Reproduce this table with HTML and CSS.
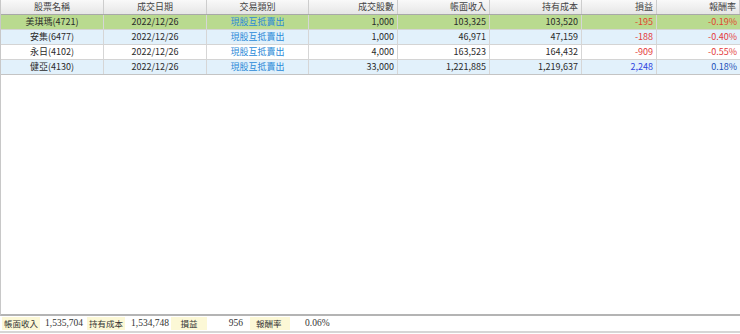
FILE: index.html
```html
<!DOCTYPE html>
<html lang="zh-Hant">
<head>
<meta charset="utf-8">
<link rel="stylesheet" href="styles.css">
</head>
<body>
<div class="app">
  <div class="grid">
    <div class="row head">
      <div class="c c1">股票名稱</div>
      <div class="c c2">成交日期</div>
      <div class="c c3">交易類別</div>
      <div class="c c4 r">成交股數</div>
      <div class="c c5 r">帳面收入</div>
      <div class="c c6 r">持有成本</div>
      <div class="c c7 r">損益</div>
      <div class="c c8 r">報酬率</div>
    </div>
    <div class="row sel">
      <div class="c c1">美琪瑪(4721)</div>
      <div class="c c2">2022/12/26</div>
      <div class="c c3 link">現股互抵賣出</div>
      <div class="c c4 r">1,000</div>
      <div class="c c5 r">103,325</div>
      <div class="c c6 r">103,520</div>
      <div class="c c7 r neg">-195</div>
      <div class="c c8 r neg">-0.19%</div>
    </div>
    <div class="row alt">
      <div class="c c1">安集(6477)</div>
      <div class="c c2">2022/12/26</div>
      <div class="c c3 link">現股互抵賣出</div>
      <div class="c c4 r">1,000</div>
      <div class="c c5 r">46,971</div>
      <div class="c c6 r">47,159</div>
      <div class="c c7 r neg">-188</div>
      <div class="c c8 r neg">-0.40%</div>
    </div>
    <div class="row">
      <div class="c c1">永日(4102)</div>
      <div class="c c2">2022/12/26</div>
      <div class="c c3 link">現股互抵賣出</div>
      <div class="c c4 r">4,000</div>
      <div class="c c5 r">163,523</div>
      <div class="c c6 r">164,432</div>
      <div class="c c7 r neg">-909</div>
      <div class="c c8 r neg">-0.55%</div>
    </div>
    <div class="row alt last">
      <div class="c c1">健亞(4130)</div>
      <div class="c c2">2022/12/26</div>
      <div class="c c3 link">現股互抵賣出</div>
      <div class="c c4 r">33,000</div>
      <div class="c c5 r">1,221,885</div>
      <div class="c c6 r">1,219,637</div>
      <div class="c c7 r pos">2,248</div>
      <div class="c c8 r pos2">0.18%</div>
    </div>
  </div>
  <div class="footer">
    <span class="lab l1">帳面收入</span>
    <span class="val v1">1,535,704</span>
    <span class="lab l2">持有成本</span>
    <span class="val v2">1,534,748</span>
    <span class="lab l3">損益</span>
    <span class="val v3">956</span>
    <span class="lab l4">報酬率</span>
    <span class="val v4">0.06%</span>
  </div>
  <div class="bottom"></div>
</div>
</body>
</html>
```

FILE: styles.css
```css
html, body {
  margin: 0;
  padding: 0;
  background: #ffffff;
}
.app {
  width: 740px;
  height: 334px;
  display: flex;
  flex-direction: column;
  font-family: "Noto Sans CJK TC", "Noto Sans", sans-serif;
  font-size: 9px;
  color: #2a2a2a;
}
.grid {
  flex: 1;
  border-left: 1px solid #c8c8c8;
  border-bottom: 2px solid #b4b4b4;
}
.row {
  display: flex;
  height: 14px;
  border-bottom: 1px solid #d4d4d4;
}
.row.head {
  height: 14px;
  background: linear-gradient(#f9f9f9, #e6e6e6);
  border-bottom: 1px solid #a8a8a8;
  color: #444;
}
.row.sel { background: #b9da8f; }
.row.alt { background: #e2f1fb; }
.row.last { border-bottom: 1px solid #c4c4c4; }
.c {
  box-sizing: border-box;
  line-height: 14px;
  text-align: center;
  border-right: 1px solid #d6d6d6;
  white-space: nowrap;
  overflow: hidden;
}
.head .c { border-right: 1px solid #cdcdcd; }
.c.r { text-align: right; padding-right: 3px; }
.c1 { width: 103px; }
.c2 { width: 103px; }
.c3 { width: 102px; }
.c4 { width: 89px; }
.c5 { width: 92px; }
.c6 { width: 92px; }
.c7 { width: 75px; }
.c8 { width: 83px; border-right: none; }
.link { color: #2a8ad8; }
.neg { color: #e43b3b; }
.sel .neg { color: #e0452e; }
.pos { color: #2f45e0; }
.pos2 { color: #2250b8; }
.footer {
  height: 13px;
  display: flex;
  align-items: center;
  padding-left: 2px;
  font-family: "Liberation Serif", "Noto Sans CJK TC", serif;
  font-size: 9.5px;
  color: #333;
  margin-top: 1px;
}
.lab {
  background: #fcf8d6;
  height: 13px;
  line-height: 13px;
  font-family: "Noto Sans CJK TC", sans-serif;
  font-size: 8.5px;
  color: #333;
  box-sizing: border-box;
  flex: none;
}
.val { height: 13px; line-height: 13px; box-sizing: border-box; white-space: nowrap; flex: none; }
.l1 { width: 38px; padding-left: 2px; }
.v1 { width: 47px; padding-left: 5px; }
.l2 { width: 38px; padding-left: 2px; }
.v2 { width: 46px; padding-left: 6px; }
.l3 { width: 36px; text-align: center; }
.v3 { width: 38px; text-align: right; padding-right: 2px; }
.l4 { width: 40px; padding-left: 6px; margin-left: 5px; }
.v4 { width: 40px; padding-left: 15px; }
.bottom {
  height: 2px;
  background: #d6d6d6;
  margin-top: 1px;
  margin-bottom: 1px;
}
```
